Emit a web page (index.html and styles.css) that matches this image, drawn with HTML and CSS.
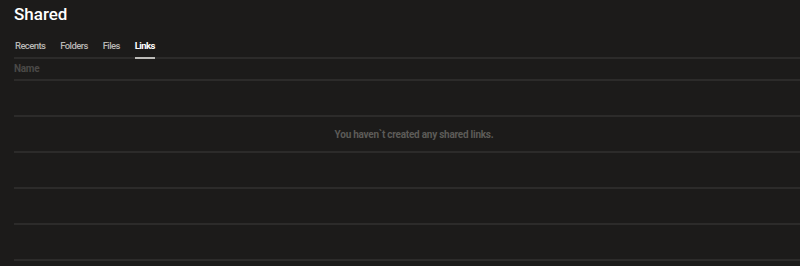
FILE: index.html
```html
<!DOCTYPE html>
<html>
<head>
<meta charset="utf-8">
<link rel="stylesheet" href="styles.css">
</head>
<body>
<div class="page">
  <h1 class="title">Shared</h1>
  <nav class="tabs">
    <span class="tab">Recents</span>
    <span class="tab">Folders</span>
    <span class="tab">Files</span>
    <span class="tab active">Links</span>
  </nav>
  <div class="header">Name</div>
  <div class="row"></div>
  <div class="row empty">You haven`t created any shared links.</div>
  <div class="row"></div>
  <div class="row"></div>
  <div class="row"></div>
</div>
</body>
</html>
```

FILE: styles.css
```css
html, body {
  margin: 0;
  padding: 0;
  background: #1c1b1a;
  overflow: hidden;
}
.page {
  padding-left: 14px;
  font-family: "Roboto", "Liberation Sans", sans-serif;
}
.title {
  margin: 0;
  padding-top: 3px;
  height: 27px;
  font-size: 17px;
  line-height: 22px;
  font-weight: 500;
  color: #ffffff;
  font-family: "Roboto", "Liberation Sans", sans-serif;
  letter-spacing: 0;
}
.tabs {
  display: flex;
  gap: 15px;
  height: 27px;
  border-bottom: 2px solid #2c2b2a;
  padding-left: 1px;
}
.tab {
  font-size: 9.5px;
  font-weight: 500;
  color: #b9b8b5;
  line-height: 14px;
  padding-top: 9px;
  box-sizing: border-box;
  height: 29px;
  margin-bottom: -2px;
  letter-spacing: -0.6px;
}
.tab.active {
  color: #ffffff;
  font-weight: 700;
  border-bottom: 2px solid #bdbcb9;
}
.header {
  height: 20px;
  border-bottom: 2px solid #2c2b2a;
  font-size: 10px;
  font-weight: 700;
  color: #4a4947;
  line-height: 20px;
  letter-spacing: -0.3px;
}
.row {
  height: 34px;
  border-bottom: 2px solid #2c2b2a;
}
.empty {
  display: flex;
  align-items: center;
  justify-content: center;
  padding-left: 14px;
  font-size: 10px;
  font-weight: 700;
  color: #5c5b58;
  letter-spacing: -0.25px;
}
```
